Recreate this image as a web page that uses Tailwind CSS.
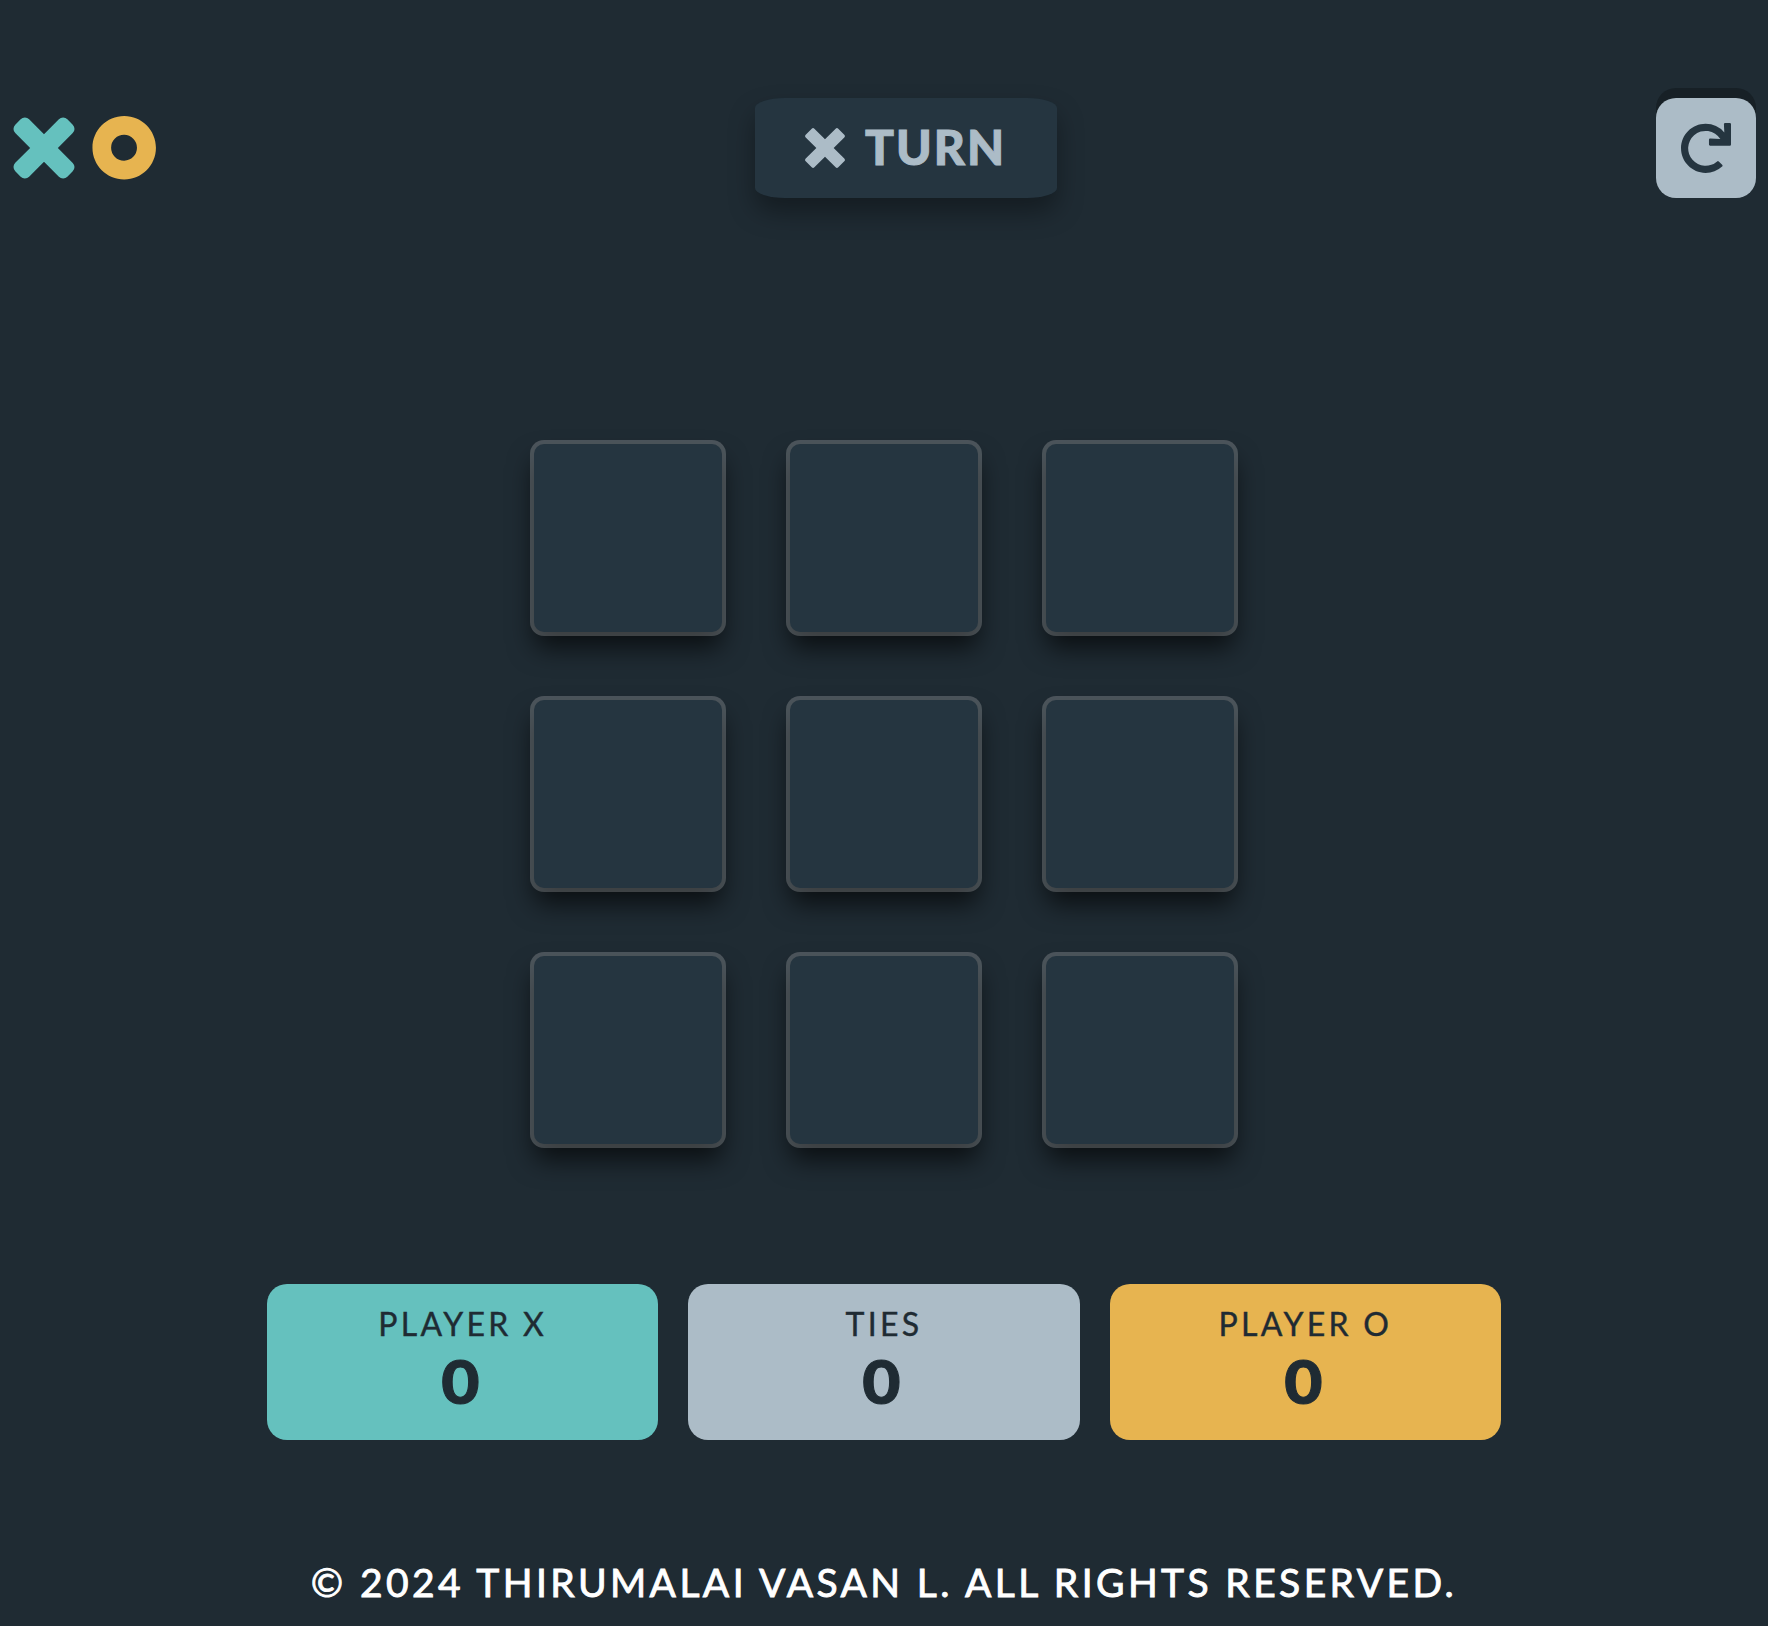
<!DOCTYPE html>
<html lang="en">
<head>
<meta charset="utf-8">
<title>Tic Tac Toe</title>
<script src="https://cdn.jsdelivr.net/npm/@tailwindcss/browser@4"></script>
</head>
<body class="h-[1626px] overflow-hidden bg-[#1f2b33] font-['Lato',sans-serif] text-[#1f2b33] flex flex-col">
  <header class="mt-[98px] h-[100px] px-3 flex items-center justify-between">
    <svg class="w-36 h-16" viewBox="0 0 72 32"><path fill="#65c1be" d="M8.562 1.634 16 9.073l7.438-7.439a3 3 0 0 1 4.243 0l2.685 2.685a3 3 0 0 1 0 4.243L22.927 16l7.439 7.438a3 3 0 0 1 0 4.243l-2.685 2.685a3 3 0 0 1-4.243 0L16 22.927l-7.438 7.439a3 3 0 0 1-4.243 0L1.634 27.68a3 3 0 0 1 0-4.243L9.073 16 1.634 8.562a3 3 0 0 1 0-4.243L4.32 1.634a3 3 0 0 1 4.242 0Z"/><path fill="#e7b450" fill-rule="evenodd" d="M56.1 0c8.765 0 15.87 7.106 15.87 15.87 0 8.766-7.105 15.871-15.87 15.871-8.765 0-15.87-7.105-15.87-15.87C40.23 7.106 47.334 0 56.1 0Zm0 9.405a6.466 6.466 0 1 0 0 12.931 6.466 6.466 0 0 0 0-12.931Z"/></svg>
    <div class="w-[302px] h-[100px] rounded-[10%] bg-[#253540] shadow-[0_14px_26px_rgba(0,0,0,0.35)] flex items-center pl-[50px] gap-5 text-[#acbcc7]">
      <svg class="size-10" viewBox="0 0 64 64" fill="currentColor"><path d="M15.002 1.147 32 18.145 48.998 1.147a3 3 0 0 1 4.243 0l9.612 9.612a3 3 0 0 1 0 4.243L45.855 32l16.998 16.998a3 3 0 0 1 0 4.243l-9.612 9.612a3 3 0 0 1-4.243 0L32 45.855 15.002 62.853a3 3 0 0 1-4.243 0L1.147 53.24a3 3 0 0 1 0-4.243L18.145 32 1.147 15.002a3 3 0 0 1 0-4.243l9.612-9.612a3 3 0 0 1 4.243 0Z"/></svg>
      <span class="pb-0.5 text-[48px] leading-none font-black tracking-[2px] [-webkit-text-stroke:1px_currentColor]">TURN</span>
    </div>
    <button class="size-[100px] rounded-[20px] bg-[#acbcc7] shadow-[0_-10px_0_#172026] flex items-center justify-center text-[#253540]">
      <svg class="size-[50px]" viewBox="0 0 20 20" fill="currentColor"><path d="M19.524 0h-1.88a.476.476 0 0 0-.476.495l.159 3.284a9.816 9.816 0 0 0-7.493-3.466c-5.422 0-9.83 4.413-9.826 9.835C.012 15.574 4.417 19.97 9.844 19.97a9.796 9.796 0 0 0 6.597-2.542.476.476 0 0 0 .018-.69l-1.348-1.348a.476.476 0 0 0-.656-.018 6.976 6.976 0 0 1-9.85-.63 6.987 6.987 0 0 1 .63-9.85 6.974 6.974 0 0 1 10.51 1.538l-4.06-.195a.476.476 0 0 0-.498.476v1.88c0 .262.213.476.476.476h7.86a.476.476 0 0 0 .477-.476V.476A.476.476 0 0 0 19.524 0Z"/></svg>
    </button>
  </header>
  <main class="mt-[246px] self-center grid grid-cols-3 gap-[68px]" id="board"></main>
  <section class="mt-[140px] self-center w-[1234px] grid grid-cols-3 gap-[30px] text-center">
    <div class="h-[156px] rounded-[20px] bg-[#65c1be] pt-5"><div class="text-[32px] leading-[40px] tracking-[3.3px] [-webkit-text-stroke:0.4px_currentColor]">PLAYER X</div><div class="pr-1 text-[60px] leading-[75px] font-black scale-x-110 [-webkit-text-stroke:1px_currentColor]">0</div></div>
    <div class="h-[156px] rounded-[20px] bg-[#acbcc7] pt-5"><div class="text-[32px] leading-[40px] tracking-[3.3px] [-webkit-text-stroke:0.4px_currentColor]">TIES</div><div class="pr-1 text-[60px] leading-[75px] font-black scale-x-110 [-webkit-text-stroke:1px_currentColor]">0</div></div>
    <div class="h-[156px] rounded-[20px] bg-[#e7b450] pt-5"><div class="text-[32px] leading-[40px] tracking-[3.3px] [-webkit-text-stroke:0.4px_currentColor]">PLAYER O</div><div class="pr-1 text-[60px] leading-[75px] font-black scale-x-110 [-webkit-text-stroke:1px_currentColor]">0</div></div>
  </section>
  <footer class="mt-[117px] self-center text-[39px] leading-[50px] tracking-[3.4px] text-white whitespace-nowrap [-webkit-text-stroke:0.9px_currentColor]">© 2024 THIRUMALAI VASAN L. ALL RIGHTS RESERVED.</footer>
<script>
  const board = document.getElementById('board');
  for (let i = 0; i < 9; i++) {
    const cell = document.createElement('button');
    cell.className = 'size-[188px] rounded-[10px] bg-[#253540] shadow-[0_0_0_4px_rgba(255,255,255,0.2),0_16px_26px_rgba(0,0,0,0.65)]';
    board.append(cell);
  }
</script>
</body>
</html>
